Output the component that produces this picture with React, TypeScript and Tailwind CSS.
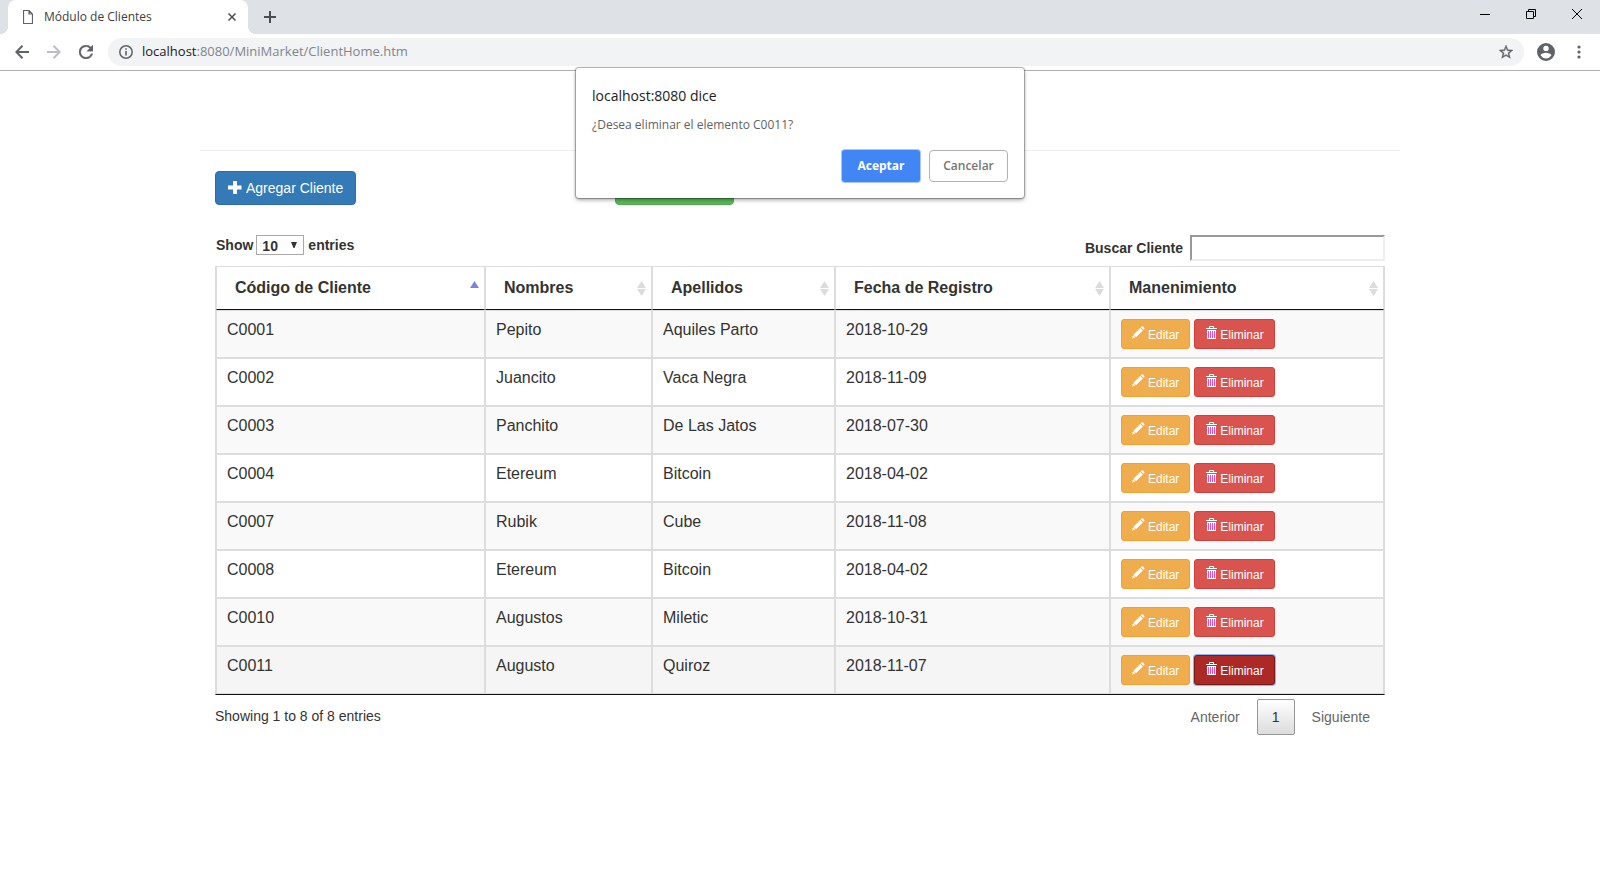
import React from "react";

type Client = { code: string; first: string; last: string; date: string };

const clients: Client[] = [
  { code: "C0001", first: "Pepito", last: "Aquiles Parto", date: "2018-10-29" },
  { code: "C0002", first: "Juancito", last: "Vaca Negra", date: "2018-11-09" },
  { code: "C0003", first: "Panchito", last: "De Las Jatos", date: "2018-07-30" },
  { code: "C0004", first: "Etereum", last: "Bitcoin", date: "2018-04-02" },
  { code: "C0007", first: "Rubik", last: "Cube", date: "2018-11-08" },
  { code: "C0008", first: "Etereum", last: "Bitcoin", date: "2018-04-02" },
  { code: "C0010", first: "Augustos", last: "Miletic", date: "2018-10-31" },
  { code: "C0011", first: "Augusto", last: "Quiroz", date: "2018-11-07" },
];

const columns = ["Código de Cliente", "Nombres", "Apellidos", "Fecha de Registro", "Manenimiento"];
const pendingCode = "C0011";

function PencilIcon() {
  return (
    <svg width="13" height="13" viewBox="0 0 13 13" fill="#fff" aria-hidden="true">
      <path d="M0 12.500 1 9.300 3.300 11.600z" />
      <path d="M1.500 8.700 8.300 1.900 10.800 4.400 4 11.200z" />
      <path d="M8.900 1.300 9.800.4q.5-.4 1 0L12.300 1.900q.4.500 0 1L11.400 3.800z" />
    </svg>
  );
}

function TrashIcon() {
  return (
    <svg width="11" height="13" viewBox="0 0 11 13" fill="none" aria-hidden="true">
      <path d="M3.500 2V.500h4V2" stroke="#fff" />
      <path d="M0 2.500h11" stroke="#fff" />
      <path d="M1 4h9v9H1z" fill="#f04fc0" />
      <path d="M1.500 4v8.500h8V4M3.500 4v8M5.500 4v8M7.500 4v8M1 4.500h9" stroke="#fff" />
    </svg>
  );
}

function PlusIcon() {
  return (
    <svg width="14" height="14" viewBox="0 0 14 14" fill="#fff" aria-hidden="true">
      <path d="M5 0h4v4.500h4.500v4H9V13H5V8.500H0v-4h5z" />
    </svg>
  );
}

function SortIcon({ active }: { active: boolean }) {
  return (
    <svg width="9" height="15" viewBox="0 0 9 15" className="shrink-0" aria-hidden="true">
      <path d="M4.500 0 9 7H0z" fill={active ? "#8080e0" : "#dcdcdc"} />
      {!active && <path d="M4.500 15 0 8h9z" fill="#dcdcdc" />}
    </svg>
  );
}

function BrowserChrome() {
  return (
    <header className="border-b border-[#b0b1b3] bg-white font-['Open_Sans','Noto_Sans',sans-serif]">
      <div className="flex h-[34px] items-stretch bg-[#dee1e6] pl-2">
        <div className="relative flex w-[240px] items-center rounded-t-lg bg-white pr-3 pl-[15px] text-[#3c4043]">
          <span className="absolute bottom-0 -left-2 size-2 bg-[radial-gradient(circle_at_0_0,#dee1e6_8px,#fff_8px)]" />
          <span className="absolute -right-2 bottom-0 size-2 bg-[radial-gradient(circle_at_100%_0,#dee1e6_8px,#fff_8px)]" />
          <svg width="10" height="14" viewBox="0 0 10 14" fill="none" stroke="#5f6368" aria-hidden="true">
            <path d="M.500.500h5.500l3.500 3.500v9.500h-9zM6 .500V4h3.500" strokeWidth="1.200" />
          </svg>
          <span className="ml-[11px] flex-1 text-xs">Módulo de Clientes</span>
          <button type="button" aria-label="Cerrar pestaña">
            <svg width="8" height="8" viewBox="0 0 8 8" stroke="#4a4e52" strokeWidth="1.500">
              <path d="M.500.500l7 7M7.500.500l-7 7" />
            </svg>
          </button>
        </div>
        <button type="button" aria-label="Nueva pestaña" className="ml-4">
          <svg width="12" height="12" viewBox="0 0 12 12" stroke="#4a4e52" strokeWidth="2">
            <path d="M6 0v12M0 6h12" />
          </svg>
        </button>
        <div className="ml-auto flex items-center gap-9 pr-[18px] pb-[6px]">
          <button type="button" aria-label="Minimizar">
            <svg width="10" height="10" viewBox="0 0 10 10" stroke="#000"><path d="M0 5.500h10" /></svg>
          </button>
          <button type="button" aria-label="Restaurar">
            <svg width="10" height="10" viewBox="0 0 10 10" fill="none" stroke="#000">
              <path d="M.500 2.500h7v7h-7zM2.500 2.500v-2h7v7h-2" />
            </svg>
          </button>
          <button type="button" aria-label="Cerrar">
            <svg width="10" height="10" viewBox="0 0 10 10" stroke="#000"><path d="M0 0l10 10M10 0L0 10" /></svg>
          </button>
        </div>
      </div>
      <div className="flex h-9 items-center pl-[15px] pr-[19px]">
        <button type="button" aria-label="Atrás">
          <svg width="14" height="14" viewBox="0 0 14 14" fill="none" stroke="#5f6368" strokeWidth="2">
            <path d="M14 7H1.500M7.500.700 1.300 7l6.200 6.300" />
          </svg>
        </button>
        <button type="button" aria-label="Adelante" className="ml-[18px]">
          <svg width="14" height="14" viewBox="0 0 14 14" fill="none" stroke="#bcbec1" strokeWidth="2">
            <path d="M0 7h12.500M6.500.700 12.700 7l-6.200 6.300" />
          </svg>
        </button>
        <button type="button" aria-label="Recargar" className="ml-[18px]">
          <svg width="14" height="14" viewBox="4 4 16 16" fill="#5f6368">
            <path d="M17.650 6.350A7.958 7.958 0 0 0 12 4a8 8 0 1 0 7.730 10h-2.080A5.990 5.990 0 0 1 12 18a6 6 0 1 1 0-12c1.660 0 3.140.690 4.220 1.780L13 11h7V4l-2.350 2.350z" stroke="#5f6368" strokeWidth=".4" />
          </svg>
        </button>
        <div className="ml-[15px] flex h-7 flex-1 items-center rounded-full bg-[#f1f3f4] pr-[11px] pl-[11px]">
          <svg width="14" height="14" viewBox="0 0 14 14" fill="none" stroke="#5f6368" strokeWidth="1.500" aria-hidden="true">
            <circle cx="7" cy="7" r="6.200" />
            <path d="M7 6v4.500M7 3.300v1.500" strokeWidth="1.600" />
          </svg>
          <span className="ml-[9px] flex-1 text-[13px] text-[#80868b]">
            <span className="text-[#202124]">localhost</span>:8080/MiniMarket/ClientHome.htm
          </span>
          <button type="button" aria-label="Agregar a favoritos">
            <svg width="14" height="14" viewBox="2 2 20 20" fill="#5f6368" stroke="#5f6368" strokeWidth=".5">
              <path d="M22 9.240l-7.190-.620L12 2 9.190 8.630 2 9.240l5.460 4.730L5.820 21 12 17.270 18.180 21l-1.630-7.030L22 9.240zM12 15.400l-3.760 2.270 1-4.280-3.320-2.880 4.380-.380L12 6.100l1.710 4.040 4.380.380-3.320 2.880 1 4.280L12 15.400z" />
            </svg>
          </button>
        </div>
        <button type="button" aria-label="Perfil" className="ml-[13px]">
          <svg width="18" height="18" viewBox="2 2 20 20" fill="#5f6368">
            <path d="M12 2a10 10 0 1 0 0 20 10 10 0 0 0 0-20zm0 3a3 3 0 1 1 0 6 3 3 0 0 1 0-6zm0 14.200a7.200 7.200 0 0 1-6-3.220c.030-1.990 4-3.080 6-3.080 1.990 0 5.970 1.090 6 3.080a7.200 7.200 0 0 1-6 3.220z" />
          </svg>
        </button>
        <button type="button" aria-label="Menú" className="ml-[22px]">
          <svg width="4" height="14" viewBox="0 0 4 14" fill="#5f6368">
            <circle cx="2" cy="2" r="1.600" /><circle cx="2" cy="7" r="1.600" /><circle cx="2" cy="12" r="1.600" />
          </svg>
        </button>
      </div>
    </header>
  );
}

function ConfirmDialog() {
  return (
    <div
      role="alertdialog"
      aria-labelledby="confirm-title"
      aria-describedby="confirm-text"
      className="absolute top-[68px] left-1/2 w-[448px] -translate-x-1/2 rounded-[3px] bg-white px-4 pt-[18px] pb-4 font-['Open_Sans','Noto_Sans',sans-serif] shadow-[0_0_1px_1px_rgba(0,0,0,0.3),0_2px_4px_rgba(0,0,0,0.35)]"
    >
      <h2 id="confirm-title" className="text-sm leading-5 text-[#202124]">localhost:8080 dice</h2>
      <p id="confirm-text" className="mt-[10px] text-xs leading-[18px] text-[#5f6368]">
        ¿Desea eliminar el elemento C0011?
      </p>
      <div className="mt-4 flex justify-end gap-[9px] text-xs font-semibold">
        <button type="button" className="h-8 w-[78px] rounded-[3px] bg-[#4285f4] font-bold text-white shadow-[0_0_0_1px_#a9c7f9]">
          Aceptar
        </button>
        <button type="button" className="h-8 w-[79px] rounded-[4px] border border-[#b0b2b5] bg-white text-[#757575]">
          Cancelar
        </button>
      </div>
    </div>
  );
}

function ClientRow({ client }: { client: Client }) {
  const pending = client.code === pendingCode;
  const cell = "border border-[#ddd] px-[10px] py-2 align-top";
  return (
    <tr className={pending ? "bg-[#f5f5f5]" : "odd:bg-[#f9f9f9]"}>
      <td className={cell}>{client.code}</td>
      <td className={cell}>{client.first}</td>
      <td className={cell}>{client.last}</td>
      <td className={cell}>{client.date}</td>
      <td className={cell}>
        <div className="flex gap-1 text-xs leading-[18px] text-white">
          <button type="button" className="flex h-[30px] items-start gap-[3px] rounded-[3px] border border-[#eea236] bg-[#f0ad4e] px-[10px] pt-[6px]">
            <PencilIcon />
            Editar
          </button>
          <button
            type="button"
            className={
              pending
                ? "flex h-[30px] items-start gap-[3px] rounded-[3px] border border-[#761c19] bg-[#ac2925] pt-[6px] pr-[10px] pl-[11px] shadow-[0_0_0_1px_#8fb4f5]"
                : "flex h-[30px] items-start gap-[3px] rounded-[3px] border border-[#d43f3a] bg-[#d9534f] pt-[6px] pr-[10px] pl-[11px]"
            }
          >
            <TrashIcon />
            Eliminar
          </button>
        </div>
      </td>
    </tr>
  );
}

export default function App() {
  return (
    <div className="relative min-h-screen bg-white">
      <BrowserChrome />
      <main className="mx-auto max-w-[1200px] pt-[79px] font-['Liberation_Sans',Arial,sans-serif] text-sm text-[#333]">
        <hr className="border-[#eee]" />
        <div className="grid grid-cols-3 items-start pt-5">
          <div className="flex px-[15px]">
            <button type="button" className="flex h-[34px] items-center gap-1 rounded-[4px] border border-[#2e6da4] bg-[#337ab7] px-3 text-white">
              <PlusIcon />
              Agregar Cliente
            </button>
          </div>
          <div className="flex px-[15px]">
            <button type="button" aria-label="Reporte" className="h-[34px] w-[119px] rounded-[4px] border border-[#4cae4c] bg-[#5cb85c]" />
          </div>
        </div>

        <section className="px-[15px] pt-[30px]">
          <div className="flex items-start justify-between font-bold">
            <label className="flex items-center gap-[3px] pl-px">
              Show
              <span className="relative flex">
                <select defaultValue="10" className="h-5 w-12 appearance-none border border-[#a9a9a9] bg-white pl-[5px] font-bold">
                  <option>10</option>
                  <option>25</option>
                  <option>50</option>
                  <option>100</option>
                </select>
                <svg width="6" height="6" viewBox="0 0 6 6" className="pointer-events-none absolute top-[7px] right-[7px]" aria-hidden="true">
                  <path d="M0 0h6L3.500 6h-1z" fill="#333" />
                </svg>
              </span>
              <span className="pl-px">entries</span>
            </label>
            <label className="flex items-center gap-[7px]">
              Buscar Cliente
              <input
                type="search"
                className="h-[26px] w-[195px] border-2 border-t-[#999] border-r-[#eee] border-b-[#eee] border-l-[#999] px-1 font-normal outline-none"
              />
            </label>
          </div>

          <table className="mt-[5px] w-full table-fixed border-separate border-spacing-0 border border-[#ddd] border-b-[#111] text-base leading-[22px]">
            <colgroup>
              <col className="w-[269px]" />
              <col className="w-[167px]" />
              <col className="w-[183px]" />
              <col className="w-[275px]" />
              <col className="w-[274px]" />
            </colgroup>
            <thead>
              <tr>
                {columns.map((name, i) => (
                  <th key={name} scope="col" className="border-x border-b border-x-[#ddd] border-b-[#111] py-[10px] pr-[5px] pl-[18px] text-left">
                    <button type="button" className="flex w-full items-center justify-between font-bold">
                      {name}
                      <SortIcon active={i === 0} />
                    </button>
                  </th>
                ))}
              </tr>
            </thead>
            <tbody>
              {clients.map((client) => (
                <ClientRow key={client.code} client={client} />
              ))}
            </tbody>
          </table>

          <div className="flex items-start justify-between pt-1">
            <p className="pt-[7px] leading-5">Showing 1 to 8 of 8 entries</p>
            <nav aria-label="Paginación" className="flex gap-[2px] text-[#666]">
              <button type="button" className="h-9 px-[15px]">Anterior</button>
              <button type="button" aria-current="page" className="h-9 w-[38px] rounded-[2px] border border-[#979797] bg-linear-to-b from-white to-[#dcdcdc] text-[#333]">
                1
              </button>
              <button type="button" className="h-9 px-[15px]">Siguiente</button>
            </nav>
          </div>
        </section>
      </main>
      <ConfirmDialog />
    </div>
  );
}
